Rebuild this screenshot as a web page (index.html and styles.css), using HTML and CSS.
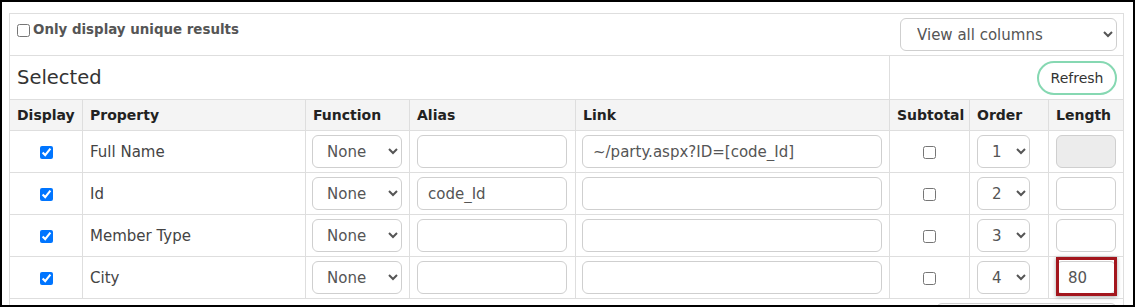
FILE: index.html
```html
<!DOCTYPE html>
<html lang="en">
<head>
    <meta charset="UTF-8">
    <title>Query columns</title>
    <link rel="stylesheet" href="styles.css">
</head>
<body>
    <div class="frame">
        <table class="grid">
            <colgroup>
                <col class="col-display">
                <col class="col-property">
                <col class="col-function">
                <col class="col-alias">
                <col class="col-link">
                <col class="col-subtotal">
                <col class="col-order">
                <col class="col-length">
            </colgroup>

            <tr class="toolbar">
                <td colspan="8">
                    <div class="toolbar-inner">
                        <label class="unique"><input type="checkbox">Only display unique results</label>
                        <select class="view-select">
                            <option>View all columns</option>
                        </select>
                    </div>
                </td>
            </tr>

            <tr class="section">
                <td colspan="5" class="section-title">Selected</td>
                <td colspan="3" class="section-actions"><button class="btn-refresh">Refresh</button></td>
            </tr>

            <tr class="head">
                <th>Display</th>
                <th>Property</th>
                <th>Function</th>
                <th>Alias</th>
                <th>Link</th>
                <th>Subtotal</th>
                <th>Order</th>
                <th>Length</th>
            </tr>

            <tr class="row">
                <td class="center"><input type="checkbox" checked></td>
                <td class="prop">Full Name</td>
                <td><select class="fn"><option>None</option></select></td>
                <td><input type="text" class="alias"></td>
                <td><input type="text" class="link" value="~/party.aspx?ID=[code_Id]"></td>
                <td class="center"><input type="checkbox"></td>
                <td><select class="order"><option>1</option></select></td>
                <td><input type="text" class="length" disabled></td>
            </tr>
            <tr class="row">
                <td class="center"><input type="checkbox" checked></td>
                <td class="prop">Id</td>
                <td><select class="fn"><option>None</option></select></td>
                <td><input type="text" class="alias" value="code_Id"></td>
                <td><input type="text" class="link"></td>
                <td class="center"><input type="checkbox"></td>
                <td><select class="order"><option>2</option></select></td>
                <td><input type="text" class="length"></td>
            </tr>
            <tr class="row">
                <td class="center"><input type="checkbox" checked></td>
                <td class="prop">Member Type</td>
                <td><select class="fn"><option>None</option></select></td>
                <td><input type="text" class="alias"></td>
                <td><input type="text" class="link"></td>
                <td class="center"><input type="checkbox"></td>
                <td><select class="order"><option>3</option></select></td>
                <td><input type="text" class="length"></td>
            </tr>
            <tr class="row">
                <td class="center"><input type="checkbox" checked></td>
                <td class="prop">City</td>
                <td><select class="fn"><option>None</option></select></td>
                <td><input type="text" class="alias"></td>
                <td><input type="text" class="link"></td>
                <td class="center"><input type="checkbox"></td>
                <td><select class="order"><option>4</option></select></td>
                <td><span class="highlight"><input type="text" class="length" value="80"></span></td>
            </tr>

            <tr class="footer">
                <td colspan="8">
                    <div class="footer-inner"><span class="footer-box"></span></div>
                </td>
            </tr>
        </table>
    </div>
</body>
</html>
```

FILE: styles.css
```css
* {
    margin: 0;
    padding: 0;
    box-sizing: border-box;
}

body {
    font-family: 'DejaVu Sans', sans-serif;
    background: white;
    color: #444;
}

.frame {
    width: 1135px;
    height: 307px;
    border: 2px solid #000;
    padding: 11px 0 0 7px;
    overflow: hidden;
}

.grid {
    border-collapse: collapse;
    table-layout: fixed;
    width: 1114px;
}

.col-display { width: 73px; }
.col-property { width: 223px; }
.col-function { width: 104px; }
.col-alias { width: 166px; }
.col-link { width: 314px; }
.col-subtotal { width: 80px; }
.col-order { width: 79px; }
.col-length { width: 75px; }

.grid td,
.grid th {
    border: 1px solid #dedede;
    vertical-align: middle;
}

/* top toolbar */
.toolbar td {
    padding: 4px 6px 4px 7px;
}

.toolbar-inner {
    display: flex;
    justify-content: space-between;
    align-items: flex-start;
}

.unique {
    display: flex;
    align-items: center;
    margin-top: 4px;
    font-size: 13.4px;
    font-weight: bold;
    line-height: 16px;
    color: #555;
}

.unique input {
    margin: 0 3px 0 0;
    width: 13px;
    height: 13px;
}

select,
input[type="text"] {
    font-family: 'DejaVu Sans', sans-serif;
    font-size: 15px;
    color: #555;
    background: white;
    border: 1px solid #cfcfcf;
    border-radius: 6px;
    height: 33px;
}

.view-select {
    width: 217px;
    padding: 0 6px 0 12px;
}

/* section title row */
.section td {
    height: 44px;
    padding: 4px 6px 4px 7px;
}

.section-title {
    font-size: 19.5px;
    color: #333;
}

.section-actions {
    text-align: right;
}

.btn-refresh {
    font-family: 'DejaVu Sans', sans-serif;
    font-size: 14px;
    color: #333;
    background: white;
    border: 2px solid #86d8b2;
    border-radius: 17px;
    width: 80px;
    height: 34px;
    cursor: pointer;
}

/* header */
.head th {
    background: #f4f4f4;
    text-align: left;
    font-size: 14px;
    font-weight: bold;
    color: #222;
    padding: 0 7px;
    height: 31px;
    line-height: 18px;
}

/* data rows */
.row td {
    height: 42px;
    padding: 0 6px;
}

.row td.center {
    text-align: center;
}

.row td.center input {
    width: 13px;
    height: 13px;
    margin: 0;
    vertical-align: middle;
}

.row td.prop {
    padding-left: 7px;
    font-size: 15px;
    color: #444;
}

.fn {
    width: 90px;
    padding: 0 6px 0 10px;
}

.alias {
    width: 150px;
    margin-left: 1px;
    padding: 0 10px;
}

.link {
    width: 300px;
    padding: 0 10px;
}

.order {
    width: 53px;
    margin-left: 1px;
    padding: 0 4px 0 10px;
}

.length {
    width: 60px;
    margin-left: 1px;
    padding: 0 11px;
}

.length:disabled {
    background: #ececec;
}

.highlight {
    position: relative;
    display: inline-block;
    vertical-align: middle;
}

.highlight input {
    display: block;
}

.highlight::after {
    content: '';
    position: absolute;
    top: -4px;
    left: 1px;
    right: -1px;
    bottom: -2px;
    border: 3px solid #a3161d;
    box-shadow: 0 1px 4px rgba(0, 0, 0, 0.35);
}

/* partial footer row */
.footer td {
    padding: 4px 6px 0 0;
    height: 40px;
    vertical-align: top;
}

.footer-inner {
    display: flex;
    justify-content: flex-end;
}

.footer-box {
    display: block;
    width: 181px;
    height: 33px;
    border: 1px solid #cfcfcf;
    border-radius: 6px;
}
```
